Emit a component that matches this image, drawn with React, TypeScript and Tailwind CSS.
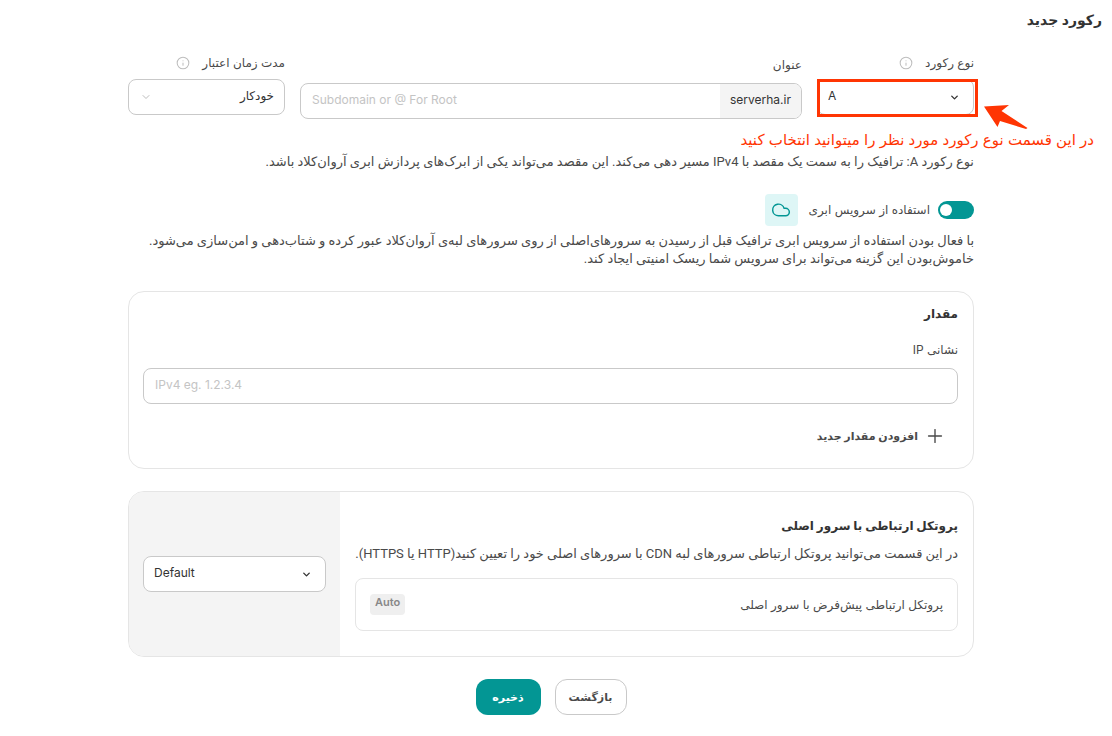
import { useState } from "react";
import type { ReactNode } from "react";
import { ChevronDown, Cloud, Info, Plus } from "lucide-react";

type SelectProps = {
  id: string;
  label?: string;
  options: string[];
  dir: "ltr" | "rtl";
  muted?: boolean;
};

function SelectBox({ id, label, options, dir, muted }: SelectProps) {
  const side = dir === "ltr" ? "right-3.5" : "left-3";
  return (
    <div className="relative">
      <select
        id={id}
        dir={dir}
        aria-label={label}
        className="block h-9 w-full appearance-none rounded-lg border border-[#c9c9c9] bg-white px-2.5 pb-0.5 text-xs text-[#333]"
      >
        {options.map((option) => (
          <option key={option}>{option}</option>
        ))}
      </select>
      <ChevronDown
        className={`pointer-events-none absolute top-3 ${side} ${muted ? "size-3 text-[#bdbdbd]" : "mt-px size-[11px] text-[#333]"}`}
        strokeWidth={muted ? 2 : 3}
      />
    </div>
  );
}

function FieldLabel({ htmlFor, children, info }: { htmlFor: string; children: ReactNode; info?: boolean }) {
  return (
    <div className="flex h-5 items-center gap-3">
      <label htmlFor={htmlFor}>{children}</label>
      {info && <Info className="size-3.5 text-[#bdbdbd]" strokeWidth={1.75} />}
    </div>
  );
}

export default function App() {
  const [cloud, setCloud] = useState(true);

  return (
    <main
      dir="rtl"
      className="min-h-screen bg-white pb-5 font-['Inter','DejaVu_Sans',sans-serif] text-xs text-[#4a4a4a]"
    >
      <h1 className="px-2.5 pt-2 text-sm leading-6 font-semibold text-[#333]">رکورد جدید</h1>

      <form className="mt-[21px] pr-[138px] pl-32" onSubmit={(event) => event.preventDefault()}>
        <div className="grid grid-cols-[157px_1fr_157px] gap-x-[15px]">
          <div>
            <FieldLabel htmlFor="record-type" info>نوع رکورد</FieldLabel>
            <div className="relative mt-1.5">
              <SelectBox id="record-type" dir="ltr" options={["A", "AAAA", "CNAME", "MX", "TXT"]} />
              <div className="pointer-events-none absolute top-0 -right-1 -bottom-0.5 left-0 border-[3px] border-[#ff3503]" />
              <svg className="absolute top-6 -right-[54px] h-7 w-11" viewBox="0 0 44 28" fill="#ff3503">
                <path d="M0 3.500 25 2 17.500 8 43.500 25 42 26 16 18 13.500 24Z" />
              </svg>
              <p className="absolute top-[49px] -right-[120px] text-[15px] leading-6 whitespace-nowrap text-[#ff3503]">
                در این قسمت نوع رکورد مورد نظر را میتوانید انتخاب کنید
              </p>
            </div>
          </div>

          <div className="pt-0.5">
            <FieldLabel htmlFor="record-name">عنوان</FieldLabel>
            <div className="mt-2 flex h-9 overflow-hidden rounded-lg border border-[#c9c9c9]">
              <span className="flex items-center bg-[#f4f4f4] px-2.5 pb-0.5 text-[#333]" dir="ltr">serverha.ir</span>
              <input
                id="record-name"
                dir="ltr"
                placeholder="Subdomain or @ For Root"
                className="min-w-0 flex-1 px-[11px] pb-0.5 placeholder:text-[#c4c4c4]"
              />
            </div>
          </div>

          <div>
            <FieldLabel htmlFor="ttl" info>مدت زمان اعتبار</FieldLabel>
            <div className="mt-1.5">
              <SelectBox id="ttl" dir="rtl" muted options={["خودکار", "۲ دقیقه", "۱ ساعت"]} />
            </div>
          </div>
        </div>

        <p className="mt-[34px] font-['Roboto','DejaVu_Sans',sans-serif] text-[13px] leading-[18px]">
          نوع رکورد A: ترافیک را به سمت یک مقصد با IPv4 مسیر دهی می‌کند. این مقصد می‌تواند یکی از ابرک‌های پردازش ابری آروان‌کلاد باشد.
        </p>

        <div className="mt-[23px] flex h-8 items-center">
          <button
            id="cloud"
            type="button"
            role="switch"
            aria-checked={cloud}
            onClick={() => setCloud(!cloud)}
            className={`flex h-[18px] w-9 items-center rounded-full px-0.5 ${cloud ? "justify-end bg-[#039694]" : "justify-start bg-gray-300"}`}
          >
            <span className="size-3 rounded-full bg-white" />
          </button>
          <label htmlFor="cloud" className="mr-2">استفاده از سرویس ابری</label>
          <span className="mr-[11px] flex h-8 w-[33px] items-center justify-center rounded-sm bg-[#def6f6]">
            <Cloud className="size-5 text-[#039694]" strokeWidth={1.75} />
          </span>
        </div>

        <p className="mt-1.5 font-['Roboto','DejaVu_Sans',sans-serif] text-[13px] leading-[18px]">
          با فعال بودن استفاده از سرویس ابری ترافیک قبل از رسیدن به سرورهای‌اصلی از روی سرورهای لبه‌ی آروان‌کلاد عبور کرده و شتاب‌دهی و امن‌سازی می‌شود.
          <br />
          خاموش‌بودن این گزینه می‌تواند برای سرویس شما ریسک امنیتی ایجاد کند.
        </p>

        <section className="mt-[23px] rounded-2xl border border-[#e5e5e5] pt-3 pr-[15px] pb-5 pl-3.5">
          <h2 className="text-xs leading-5 font-bold text-[#333]">مقدار</h2>
          <label htmlFor="ip" className="mt-4 block leading-5">نشانی IP</label>
          <input
            id="ip"
            dir="ltr"
            placeholder="IPv4 eg. 1.2.3.4"
            className="mt-2 block h-9 w-full rounded-lg border border-[#c9c9c9] px-[11px] pb-1 placeholder:text-[#c4c4c4]"
          />
          <button type="button" className="mt-5 mr-3 flex h-6 items-center gap-1.5 text-[11px] font-semibold">
            <Plus className="size-[22px]" strokeWidth={1.5} />
            افزودن مقدار جدید
          </button>
        </section>

        <section className="mt-[22px] flex overflow-hidden rounded-2xl border border-[#e5e5e5]">
          <div className="min-w-0 flex-1 px-[15px] pt-6 pb-[25px]">
            <h2 className="text-xs leading-5 font-bold text-[#333]">پروتکل ارتباطی با سرور اصلی</h2>
            <p className="mt-2 font-['Roboto','DejaVu_Sans',sans-serif] text-[13px] leading-5 whitespace-nowrap">
              در این قسمت می‌توانید پروتکل ارتباطی سرورهای لبه CDN با سرورهای اصلی خود را تعیین کنید(HTTP یا HTTPS).
            </p>
            <div className="mt-3.5 flex h-[53px] items-center justify-between rounded-lg border border-[#e5e5e5] px-3.5">
              <span>پروتکل ارتباطی پیش‌فرض با سرور اصلی</span>
              <span className="rounded-sm bg-[#efefef] px-[5px] pb-1 text-[11px] leading-[17px] font-semibold text-[#888]">Auto</span>
            </div>
          </div>
          <div className="flex w-[211px] items-center bg-[#f4f4f4] px-3.5">
            <div className="w-full">
              <SelectBox id="protocol" label="پروتکل" dir="ltr" options={["Default", "HTTP", "HTTPS"]} />
            </div>
          </div>
        </section>

        <div className="mt-[22px] flex justify-center gap-3.5">
          <button type="button" className="h-9 w-[72px] rounded-xl border border-[#c9c9c9] text-[11px] font-semibold">بازگشت</button>
          <button type="submit" className="h-9 w-[65px] rounded-xl bg-[#039694] text-[11px] font-bold text-white">ذخیره</button>
        </div>
      </form>
    </main>
  );
}
